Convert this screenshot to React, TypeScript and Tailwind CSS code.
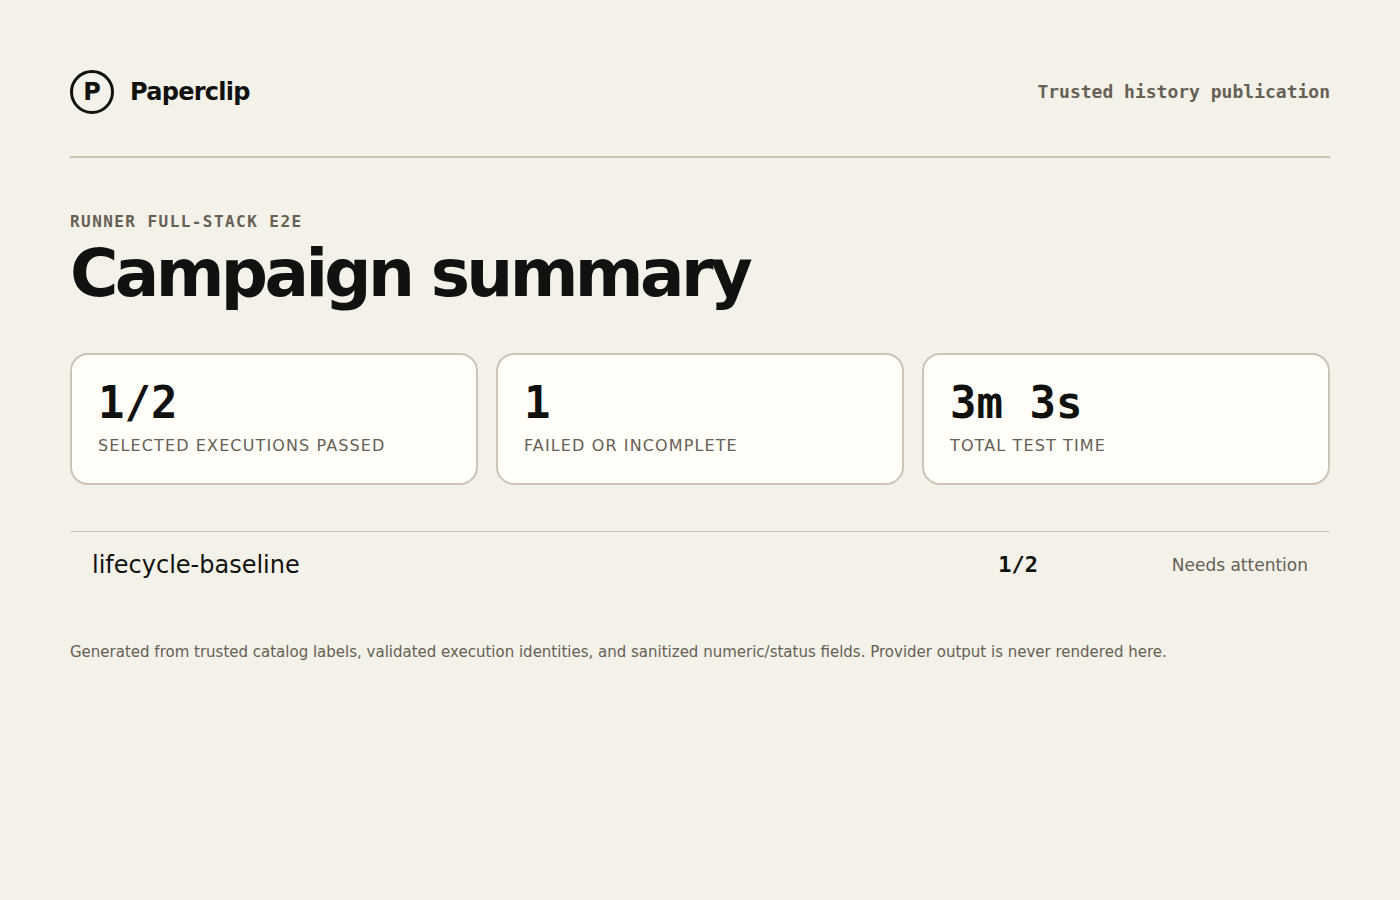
type Metric = { value: string; label: string };
type Suite = { name: string; passed: string; status: string };

const METRICS: Metric[] = [
  { value: "1/2", label: "Selected executions passed" },
  { value: "1", label: "Failed or incomplete" },
  { value: "3m 3s", label: "Total test time" },
];

const SUITES: Suite[] = [{ name: "lifecycle-baseline", passed: "1/2", status: "Needs attention" }];

function Header() {
  return (
    <header className="flex items-center justify-between border-b-2 border-[#cbc5b8] pb-[42px]">
      <div className="flex items-center gap-4 text-2xl font-bold">
        <span className="grid size-11 place-items-center rounded-full border-3 border-[#11110f]">P</span>
        <span className="tracking-[-0.03em]">Paperclip</span>
      </div>
      <span className="font-['DejaVu_Sans_Mono',monospace] text-lg font-bold text-[#666055]">
        Trusted history publication
      </span>
    </header>
  );
}

function MetricCard({ value, label }: Metric) {
  return (
    <div className="rounded-[18px] border-2 border-[#cbc5b8] bg-[#fffef8] px-[26px] pt-6 pb-[27px]">
      <div className="font-['DejaVu_Sans_Mono',monospace] text-[44px] leading-[48px] font-bold">{value}</div>
      <div className="mt-[9px] text-base leading-5 tracking-[0.07em] text-[#666055] uppercase">{label}</div>
    </div>
  );
}

export default function App() {
  return (
    <main className="min-h-screen bg-[#f4f1e8] p-[70px] font-['DejaVu_Sans',sans-serif] text-[#11110f]">
      <Header />
      <p className="mt-[54px] font-['DejaVu_Sans_Mono',monospace] text-base leading-5 font-bold tracking-[0.09em] text-[#666055] uppercase">
        Runner full-stack E2E
      </p>
      <h1 className="mt-[9px] text-[66px] leading-[66px] font-bold tracking-[-0.055em]">Campaign summary</h1>
      <section className="mt-[46px] grid grid-cols-3 gap-[18px]">
        {METRICS.map((m) => (
          <MetricCard key={m.label} {...m} />
        ))}
      </section>
      <table className="mt-[46px] w-full border-collapse">
        <tbody>
          {SUITES.map((s) => (
            <tr key={s.name} className="border-t border-[#cbc5b8]">
              <td className="px-[22px] py-4 text-2xl">{s.name}</td>
              <td className="w-[110px] py-4 text-right font-['DejaVu_Sans_Mono',monospace] text-[22px] font-bold">
                {s.passed}
              </td>
              <td className="w-[292px] px-[22px] py-4 text-right text-[17px] leading-7 text-[#666055]">{s.status}</td>
            </tr>
          ))}
        </tbody>
      </table>
      <footer className="mt-[45px] text-[15px] leading-5 text-[#666055]">
        Generated from trusted catalog labels, validated execution identities, and sanitized numeric/status fields.
        Provider output is never rendered here.
      </footer>
    </main>
  );
}
